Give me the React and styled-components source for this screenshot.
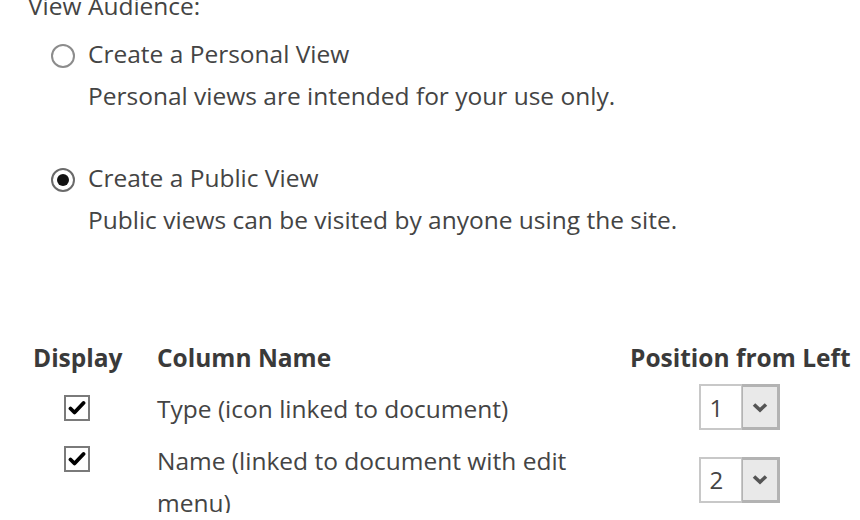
import React from 'react';
import styled, { createGlobalStyle } from 'styled-components';

const GlobalStyle = createGlobalStyle`
    html, body {
        margin: 0;
        padding: 0;
        background: #ffffff;
        overflow: hidden;
    }

    body {
        font-family: "Open Sans", "Noto Sans", sans-serif;
        color: #444444;
    }
`;

const Page = styled.div`
    width: 860px;
    height: 520px;
    padding-left: 28px;
    box-sizing: border-box;
`;

const Legend = styled.div`
    font-size: 24.5px;
    line-height: 26px;
    margin-top: -7.5px;
`;

const Options = styled.div`
    display: flex;
    flex-direction: column;
    gap: 40px;
    margin-top: 14px;
    margin-left: 23px;
`;

const Option = styled.label`
    display: grid;
    grid-template-columns: 24px 1fr;
    column-gap: 13px;
    align-items: start;
`;

const Radio = styled.span`
    position: relative;
    width: 24px;
    height: 24px;
    margin-top: 11px;
    border: 2px solid #8c8c8c;
    border-radius: 50%;
    box-sizing: border-box;

    ${({ checked }) => checked && `
        border-color: #6a6a6a;

        &::after {
            content: '';
            position: absolute;
            left: 4px;
            top: 4px;
            width: 12px;
            height: 12px;
            border-radius: 50%;
            background: #111111;
        }
    `}
`;

const OptionText = styled.div`
    font-size: 24.5px;
    line-height: 42px;
`;

const Table = styled.div`
    display: flex;
    flex-direction: column;
    margin-top: 96px;
    margin-left: 5px;
    width: 817px;
`;

const GridRow = styled.div`
    display: grid;
    grid-template-columns: 124px 1fr 220px;
    align-items: start;
    padding-top: ${({ head }) => (head ? '0' : '9.5px')};
`;

const HeadCell = styled.div`
    font-size: 24.5px;
    line-height: 42px;
    font-weight: 700;
    color: #3a3a3a;
    text-align: ${({ align }) => align || 'left'};
    white-space: nowrap;
`;

const CheckCell = styled.div`
    padding-left: 31px;
    padding-top: 6.5px;
`;

const NameCell = styled.div`
    font-size: 24.5px;
    line-height: 42px;
    max-width: 430px;
`;

const PositionCell = styled.div`
    align-self: center;
    display: flex;
    justify-content: center;
    margin-top: -4px;
    padding-right: 2px;
`;

const Checkbox = styled.span`
    display: flex;
    align-items: center;
    justify-content: center;
    width: 26px;
    height: 26px;
    border: 2px solid #7a7a7a;
    box-sizing: border-box;
    background: #ffffff;
`;

const Select = styled.div`
    display: flex;
    width: 81px;
    height: 46px;
    box-sizing: border-box;
    border: 2px solid #c8c8c8;
`;

const SelectValue = styled.div`
    flex: 1;
    display: flex;
    align-items: center;
    padding-left: 9px;
    font-size: 24px;
    color: #444444;
    background: #ffffff;
    border-right: 1px solid #c8c8c8;
`;

const SelectButton = styled.div`
    width: 34px;
    display: flex;
    align-items: center;
    justify-content: center;
    background: #e9e9e9;
    border: 3px solid #b3b3b3;
    border-left-width: 1px;
    margin: -2px -2px -2px 0;
`;

function CheckMark() {
    return (
        <svg width="18" height="16" viewBox="0 0 18 16">
            <path d="M2.5 8.5 L6.5 12.5 L15.5 3" fill="none" stroke="#000" strokeWidth="3.8" strokeLinecap="round" strokeLinejoin="round" />
        </svg>
    );
}

function Chevron() {
    return (
        <svg width="16" height="11" viewBox="0 0 16 11">
            <path d="M2 2.5 L8 8 L14 2.5" fill="none" stroke="#555" strokeWidth="3.6" />
        </svg>
    );
}

function PositionSelect({ value }) {
    return (
        <Select>
            <SelectValue>{value}</SelectValue>
            <SelectButton><Chevron /></SelectButton>
        </Select>
    );
}

const columns = [
    { name: 'Type (icon linked to document)', position: 1 },
    { name: 'Name (linked to document with edit menu)', position: 2 },
];

export default function App() {
    return (
        <Page>
            <GlobalStyle />
            <Legend>View Audience:</Legend>
            <Options>
                <Option>
                    <Radio />
                    <OptionText>
                        Create a Personal View
                        <br />
                        Personal views are intended for your use only.
                    </OptionText>
                </Option>
                <Option>
                    <Radio checked />
                    <OptionText>
                        Create a Public View
                        <br />
                        Public views can be visited by anyone using the site.
                    </OptionText>
                </Option>
            </Options>
            <Table>
                <GridRow head>
                    <HeadCell>Display</HeadCell>
                    <HeadCell>Column Name</HeadCell>
                    <HeadCell align="right">Position from Left</HeadCell>
                </GridRow>
                {columns.map((col) => (
                    <GridRow key={col.name}>
                        <CheckCell>
                            <Checkbox><CheckMark /></Checkbox>
                        </CheckCell>
                        <NameCell>{col.name}</NameCell>
                        <PositionCell>
                            <PositionSelect value={col.position} />
                        </PositionCell>
                    </GridRow>
                ))}
            </Table>
        </Page>
    );
}
